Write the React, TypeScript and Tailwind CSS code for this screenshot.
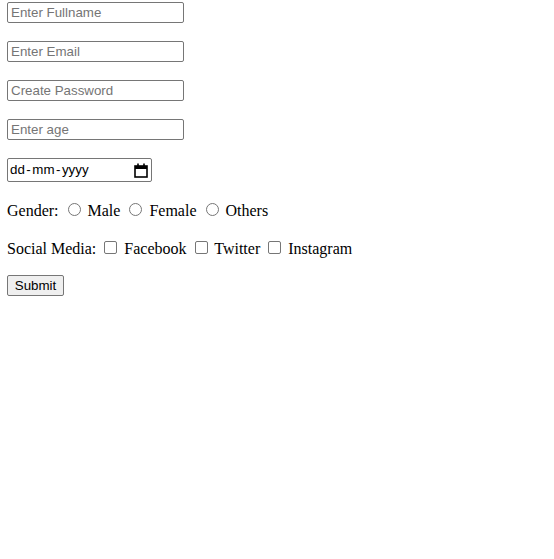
import React from "react";

const textInput =
	"block h-[21px] w-[177px] rounded-[2px] border border-[#767676] bg-white pl-[3px] pr-[2px] text-[13.33px] leading-[15px] text-black outline-none placeholder:text-[#757575]";

function Radio() {
	return <span className="ml-[5px] mr-[3px] inline-block h-[13px] w-[13px] rounded-full border border-[#767676] bg-white align-baseline" />;
}

function Checkbox() {
	return <span className="ml-[4px] mr-[3px] inline-block h-[13px] w-[13px] rounded-[2px] border border-[#767676] bg-white align-baseline" />;
}

function CalendarIcon() {
	return (
		<svg width="14" height="15" viewBox="0 0 14 15" aria-hidden="true">
			<rect x="1" y="3" width="12" height="11" fill="none" stroke="#000" strokeWidth="1.6" />
			<rect x="1" y="3" width="12" height="3" fill="#000" />
			<rect x="3.2" y="0.5" width="1.6" height="3" fill="#000" />
			<rect x="9.2" y="0.5" width="1.6" height="3" fill="#000" />
		</svg>
	);
}

export default function App() {
	return (
		<div className="min-h-[559px] bg-white pl-[7px] pt-[2px] font-['Liberation_Serif',serif] text-[16px] text-black">
			<form className="flex flex-col items-start" onSubmit={(e) => e.preventDefault()}>
				<input className={`${textInput} font-['Liberation_Sans',Arial,sans-serif]`} placeholder="Enter Fullname" />
				<input className={`${textInput} mt-[18px] font-['Liberation_Sans',Arial,sans-serif]`} placeholder="Enter Email" />
				<input className={`${textInput} mt-[18px] font-['Liberation_Sans',Arial,sans-serif]`} placeholder="Create Password" type="password" />
				<input className={`${textInput} mt-[18px] font-['Liberation_Sans',Arial,sans-serif]`} placeholder="Enter age" />

				<div className="mt-[18px] flex h-[24px] w-[145px] items-center justify-between rounded-[2px] border border-[#767676] bg-white pl-[2px] pr-[3px] font-['Liberation_Sans',Arial,sans-serif] text-[13.33px] text-black">
					<span className="flex gap-[1.5px]">
						<span>dd</span>
						<span>-</span>
						<span>mm</span>
						<span>-</span>
						<span>yyyy</span>
					</span>
					<CalendarIcon />
				</div>

				<div className="mt-[20px] h-[18px] whitespace-nowrap leading-[18px]">
					Gender: <Radio /> Male <Radio /> Female <Radio /> Others
				</div>

				<div className="mt-[20px] h-[18px] whitespace-nowrap leading-[18px]">
					Social Media: <Checkbox /> Facebook <Checkbox /> Twitter <Checkbox /> Instagram
				</div>

				<button
					type="submit"
					className="mt-[17px] h-[21px] w-[57px] rounded-[2px] border border-[#767676] bg-[#efefef] text-center font-['Liberation_Sans',Arial,sans-serif] text-[13.33px] leading-[15px] text-black"
				>
					Submit
				</button>
			</form>
		</div>
	);
}
